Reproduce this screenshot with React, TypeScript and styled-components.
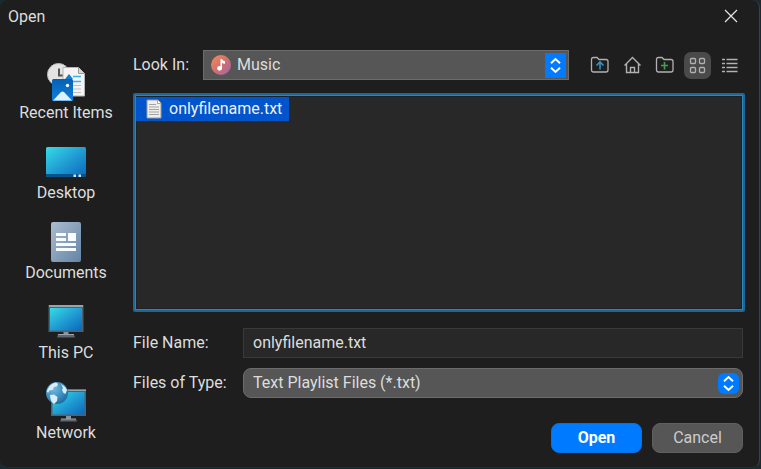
import React from "react";
import styled, { createGlobalStyle, css } from "styled-components";

const GlobalStyle = createGlobalStyle`
  * { box-sizing: border-box; }
  body {
    margin: 0;
    background: #1a2a31;
    color: #dddddd;
    font: 16px/20px Roboto, "Noto Sans", sans-serif;
  }
  button, input, select { font: inherit; color: inherit; }
`;

const Backdrop = styled.div`
  min-height: 100vh;
  display: flex;
  padding: 0 1px 1px 0;
`;

const Dialog = styled.form`
  flex: 1;
  display: flex;
  flex-direction: column;
  background: #1e1e1e;
  border-right: 1px solid #3a4347;
  border-bottom: 1px solid #2b2b2b;
  border-radius: 8px;
`;

const TitleBar = styled.header`
  display: flex;
  justify-content: space-between;
  align-items: center;
  height: 32px;
  padding: 0 20px 0 8px;
`;

const Title = styled.h1`
  margin: 0;
  padding-top: 2px;
  font-size: 16px;
  font-weight: 400;
`;

const CloseButton = styled.button`
  display: grid;
  place-items: center;
  width: 16px;
  height: 16px;
  padding: 0;
  border: 0;
  background: none;
`;

const Body = styled.div`
  flex: 1;
  display: flex;
`;

const Places = styled.nav`
  flex: none;
  width: 133px;
  padding: 30px 1px 0 0;
  display: flex;
  flex-direction: column;
  gap: 19px;
`;

const Place = styled.button`
  display: flex;
  flex-direction: column;
  align-items: center;
  gap: 1px;
  height: 61px;
  padding: 0;
  border: 0;
  background: none;
  white-space: nowrap;
`;

const Main = styled.main`
  flex: 1;
  min-width: 0;
  display: flex;
  flex-direction: column;
  padding: 18px 14px 14px 0;
`;

const Row = styled.div<{ $gap?: number }>`
  display: flex;
  align-items: center;
  margin-top: ${(p) => p.$gap ?? 0}px;
  padding-right: 2px;
`;

const Label = styled.label<{ $width: number }>`
  flex: none;
  width: ${(p) => p.$width}px;
`;

const Combo = styled.div<{ $round?: boolean }>`
  flex: 1;
  min-width: 0;
  height: 30px;
  display: grid;
  align-items: center;
  background: #565656;
  border: 1px solid #6c6c6c;
  border-radius: ${(p) => (p.$round ? 8 : 0)}px;

  > * { grid-area: 1 / 1; }
  > svg { pointer-events: none; margin-left: 7px; }
`;

const Select = styled.select<{ $indent: number }>`
  appearance: none;
  width: 100%;
  height: 28px;
  padding: 0 32px 0 ${(p) => p.$indent}px;
  border: 0;
  outline: 0;
  background: none;
`;

const Arrow = styled.span<{ $round?: boolean }>`
  justify-self: end;
  display: grid;
  place-items: center;
  width: 21px;
  height: 25px;
  margin-right: 2px;
  background: #007aff;
  pointer-events: none;
  ${(p) =>
    p.$round &&
    css`
      height: 21px;
      margin-right: 3px;
      border-radius: 6px;
    `}
`;

const Tools = styled.div`
  flex: none;
  display: flex;
  justify-content: space-between;
  width: 157px;
  margin-left: 17px;
`;

const Tool = styled.button<{ $active?: boolean }>`
  display: grid;
  place-items: center;
  width: 27px;
  height: 27px;
  padding: 0;
  border: 0;
  border-radius: 7px;
  background: ${(p) => (p.$active ? "#4a4a4a" : "none")};
`;

const FileList = styled.ul`
  flex: 1;
  min-height: 100px;
  margin: 13px 0 0;
  padding: 2px 1px;
  list-style: none;
  background: #282828;
  border: 2px solid #1d6696;
  border-radius: 2px;
  box-shadow: inset 0 0 0 1px #2a86bf, inset 0 0 0 2px #1c2226;
`;

const FileItem = styled.button`
  display: flex;
  align-items: center;
  gap: 5px;
  height: 24px;
  padding: 0 7px 0 8px;
  border: 0;
  background: #0054cc;
  color: #f0f0f0;
`;

const NameInput = styled.input`
  flex: 1;
  min-width: 0;
  height: 30px;
  padding: 0 9px 2px;
  background: #282828;
  border: 1px solid #393939;
  outline: 0;
`;

const Actions = styled.div`
  display: flex;
  justify-content: flex-end;
  gap: 10px;
  margin-top: 25px;
  padding-right: 2px;
`;

const Action = styled.button<{ $primary?: boolean }>`
  width: 91px;
  height: 30px;
  padding: 0;
  border: 1px solid ${(p) => (p.$primary ? "#0870df" : "#606060")};
  border-radius: 8px;
  background: ${(p) => (p.$primary ? "#007aff" : "#565656")};
  color: ${(p) => (p.$primary ? "#ffffff" : "#cccccc")};
  font-weight: ${(p) => (p.$primary ? 700 : 400)};
`;

const Chevrons = () => (
  <svg width="21" height="21" viewBox="0 0 21 21" fill="none" stroke="#fff" strokeWidth="2">
    <path d="M6 8.2 10.5 4l4.500 4.200M6 12.800l4.500 4.200 4.500-4.200" />
  </svg>
);

const ScreenGradient = ({ id }: { id: string }) => (
  <defs>
    <linearGradient id={id} x1="0" y1="0" x2="1" y2="1">
      <stop offset="0" stopColor="#35dce6" />
      <stop offset="0.5" stopColor="#219ed3" />
      <stop offset="1" stopColor="#0967bd" />
    </linearGradient>
  </defs>
);

const RecentIcon = () => (
  <svg width="40" height="40" viewBox="0 0 40 40">
    <defs>
      <linearGradient id="photo" x1="0" y1="0" x2="0" y2="1">
        <stop offset="0" stopColor="#0560b4" />
        <stop offset="1" stopColor="#1180dc" />
      </linearGradient>
    </defs>
    <circle cx="12.500" cy="12.500" r="11" fill="#e4e4e4" stroke="#b9bdc0" />
    <path d="M13 6.500v7h4" fill="none" stroke="#555" strokeWidth="2" />
    <path d="M17 5.500h15.500l6 6V34H17z" fill="#f4f4f4" stroke="#b5b5b5" />
    <path d="M32.500 5.500v6h6" fill="#d6d6d6" stroke="#999" />
    <path d="M27 14.500h8M27 19.500h8" stroke="#35b5ef" strokeWidth="1.400" />
    <path d="M27 23.500h8M27 27h8M27 30.500h8" stroke="#c2c2c2" />
    <path d="M19 17l4-5 4 5z" fill="#167bd0" />
    <rect x="6" y="17" width="21" height="22" rx="1.500" fill="url(#photo)" />
    <path d="M7 38.500 15 30q1.500-1.200 3 0l8 8.500z" fill="#dff3ff" />
    <circle cx="21.500" cy="23.500" r="1.700" fill="#fff" />
  </svg>
);

const DesktopIcon = () => (
  <svg width="40" height="40" viewBox="0 0 40 40">
    <ScreenGradient id="desk" />
    <rect x="0" y="5" width="40" height="30" rx="1.500" fill="url(#desk)" />
    <path d="M0 32h40v1.500a1.500 1.500 0 0 1-1.500 1.500h-37A1.500 1.500 0 0 1 0 33.500z" fill="#07538c" />
    <path d="M27.500 32.500h2.500V35h-2.500zM32.500 32.500H35V35h-2.500z" fill="#d4e4f2" />
  </svg>
);

const DocumentsIcon = () => (
  <svg width="40" height="40" viewBox="0 0 40 40">
    <defs>
      <linearGradient id="docs" x1="0" y1="0" x2="1" y2="1">
        <stop offset="0" stopColor="#acbdcf" />
        <stop offset="1" stopColor="#6484a6" />
      </linearGradient>
    </defs>
    <rect x="5" y="0" width="30" height="40" rx="2" fill="url(#docs)" />
    <path
      d="M10 11h10v3H10zM10 16h10v3H10zM22 11h8v8h-8zM10 21h20v3H10zM10 26h20v3H10z"
      fill="#f8fbff"
    />
  </svg>
);

const ComputerIcon = () => (
  <svg width="40" height="40" viewBox="0 0 40 40">
    <ScreenGradient id="pc" />
    <path d="M17.500 29h5v4h-5z" fill="#8b9299" />
    <path d="M12 32.500h16l1 3H11z" fill="#5d656d" />
    <path d="M12 32h16v1H12z" fill="#9ba3aa" />
    <rect x="2.500" y="3" width="35" height="27" fill="#52606b" />
    <path d="M3 3h34v2H3z" fill="#9aa3ab" />
    <rect x="4" y="6" width="32" height="22.500" fill="url(#pc)" />
  </svg>
);

const NetworkIcon = () => (
  <svg width="40" height="40" viewBox="0 0 40 40">
    <ScreenGradient id="net" />
    <defs>
      <radialGradient id="globe" cx="0.35" cy="0.3" r="0.8">
        <stop offset="0" stopColor="#70bce2" />
        <stop offset="1" stopColor="#17669e" />
      </radialGradient>
    </defs>
    <path d="M20 34h5v4h-5z" fill="#8b9299" />
    <path d="M15 37h15l1 2.500H14z" fill="#5d656d" />
    <path d="M15 36.500h15v1H15z" fill="#9ba3aa" />
    <rect x="5" y="7.500" width="35" height="26.500" fill="#52606b" />
    <path d="M5 7.500h35V9H5z" fill="#9aa3ab" />
    <rect x="6.500" y="10" width="32" height="22.500" fill="url(#net)" />
    <circle cx="11" cy="11" r="11" fill="url(#globe)" />
    <path
      d="M3 5q3-4 7-4.500l2 1.500-1 2.500-3 .5-1.500 3-3 .5L2 11 0.800 9zM15 2q4 2 6 6l-1.500 4-2-1-1.500-3 1-2zM4 13l4-.5 3.500 2.500-.5 4-3 3Q5 20 4.500 17z"
      fill="#d9eef7"
    />
  </svg>
);

const MusicIcon = () => (
  <svg width="20" height="20" viewBox="0 0 20 20">
    <defs>
      <linearGradient id="music" x1="0" y1="0" x2="1" y2="1">
        <stop offset="0.1" stopColor="#f0895a" />
        <stop offset="0.5" stopColor="#d0716f" />
        <stop offset="1" stopColor="#9f63b2" />
      </linearGradient>
    </defs>
    <circle cx="10" cy="10" r="10" fill="url(#music)" />
    <circle cx="8.600" cy="13.300" r="2.400" fill="#fff" />
    <path d="M9.500 13.500V4h1.500q.4 2 3 2.300v2.400q-2 .2-3-1v5.800z" fill="#fff" />
  </svg>
);

const TextFileIcon = () => (
  <svg width="20" height="20" viewBox="0 0 20 20">
    <path d="M3 1h11l3 3v15H3z" fill="#eeeeec" stroke="#999b98" />
    <path d="M13.500 1v3.500H17" fill="#fff" stroke="#a6a6a6" />
    <path d="M5 5.500h7M5 8h10M5 10.500h10M5 13h10M5 15.500h10" stroke="#a4a5a3" />
  </svg>
);

const folderPath =
  "M1.500 3.500q0-2 2-2h3.500l2 2h7q2 0 2 2v8.500q0 2-2 2H3.500q-2 0-2-2z";

const FolderUpIcon = () => (
  <svg width="19" height="18" viewBox="0 0 19 18" fill="none" stroke="#afb1b3" strokeWidth="1.300">
    <path d={folderPath} />
    <path d="M10 13.500V6.500M6.500 9.500 10 6l3.500 3.500" stroke="#3592c4" strokeWidth="1.600" />
  </svg>
);

const HomeIcon = () => (
  <svg width="19" height="18" viewBox="0 0 19 18" fill="none" stroke="#afb1b3" strokeWidth="1.400">
    <path d="M1.500 9.500l8-8 8 8M3.500 8v8.500h12V8M7.500 16.500v-5h4v5" />
  </svg>
);

const NewFolderIcon = () => (
  <svg width="19" height="18" viewBox="0 0 19 18" fill="none" stroke="#afb1b3" strokeWidth="1.300">
    <path d={folderPath} />
    <path d="M9.500 6v7.500M6 9.500h7" stroke="#499c54" strokeWidth="1.600" />
  </svg>
);

const GridIcon = () => (
  <svg width="17" height="17" viewBox="0 0 17 17" fill="none" stroke="#afb1b3" strokeWidth="1.300">
    <rect x="1.500" y="1.500" width="5" height="5" rx="1" />
    <rect x="10.500" y="1.500" width="5" height="5" rx="1" />
    <rect x="1.500" y="10.500" width="5" height="5" rx="1" />
    <rect x="10.500" y="10.500" width="5" height="5" rx="1" />
  </svg>
);

const DetailsIcon = () => (
  <svg width="17" height="17" viewBox="0 0 17 17" stroke="#afb1b3" strokeWidth="1.300">
    <path d="M1 2.500h3M5.500 2.500h11M1 6.500h3M5.500 6.500h11M1 10.500h3M5.500 10.500h11M1 14.500h3M5.500 14.500h11" />
  </svg>
);

const places = [
  { name: "Recent Items", Icon: RecentIcon },
  { name: "Desktop", Icon: DesktopIcon },
  { name: "Documents", Icon: DocumentsIcon },
  { name: "This PC", Icon: ComputerIcon },
  { name: "Network", Icon: NetworkIcon },
];

const tools = [
  { name: "Up One Level", Icon: FolderUpIcon },
  { name: "Home", Icon: HomeIcon },
  { name: "Create New Folder", Icon: NewFolderIcon },
  { name: "List", Icon: GridIcon, active: true },
  { name: "Details", Icon: DetailsIcon },
];

export default function App() {
  return (
    <>
      <GlobalStyle />
      <Backdrop>
        <Dialog onSubmit={(e) => e.preventDefault()}>
          <TitleBar>
            <Title>Open</Title>
            <CloseButton type="button" aria-label="Close">
              <svg width="14" height="14" viewBox="0 0 14 14" stroke="#e6e6e6" strokeWidth="1.200">
                <path d="M1 1l12 12M13 1 1 13" />
              </svg>
            </CloseButton>
          </TitleBar>
          <Body>
            <Places aria-label="Places">
              {places.map(({ name, Icon }) => (
                <Place key={name} type="button">
                  <Icon />
                  <span>{name}</span>
                </Place>
              ))}
            </Places>
            <Main>
              <Row>
                <Label $width={70} htmlFor="look-in">Look In:</Label>
                <Combo>
                  <Select id="look-in" $indent={33}>
                    <option>Music</option>
                  </Select>
                  <MusicIcon />
                  <Arrow>
                    <Chevrons />
                  </Arrow>
                </Combo>
                <Tools>
                  {tools.map(({ name, Icon, active }) => (
                    <Tool key={name} type="button" aria-label={name} $active={active}>
                      <Icon />
                    </Tool>
                  ))}
                </Tools>
              </Row>
              <FileList aria-label="Files">
                <li>
                  <FileItem type="button">
                    <TextFileIcon />
                    onlyfilename.txt
                  </FileItem>
                </li>
              </FileList>
              <Row $gap={16}>
                <Label $width={110} htmlFor="file-name">File Name:</Label>
                <NameInput id="file-name" type="text" defaultValue="onlyfilename.txt" />
              </Row>
              <Row $gap={10}>
                <Label $width={110} htmlFor="file-type">Files of Type:</Label>
                <Combo $round>
                  <Select id="file-type" $indent={9}>
                    <option>Text Playlist Files (*.txt)</option>
                  </Select>
                  <Arrow $round>
                    <Chevrons />
                  </Arrow>
                </Combo>
              </Row>
              <Actions>
                <Action type="submit" $primary>Open</Action>
                <Action type="button">Cancel</Action>
              </Actions>
            </Main>
          </Body>
        </Dialog>
      </Backdrop>
    </>
  );
}
